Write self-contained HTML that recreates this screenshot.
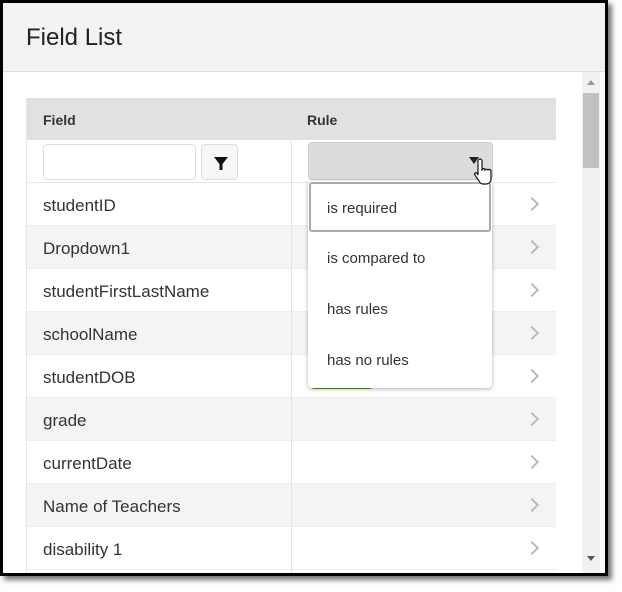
<!DOCTYPE html>
<html><head><style>
*{box-sizing:border-box;margin:0;padding:0}
body{width:622px;height:592px;background:#fff;position:relative;overflow:hidden;font-family:"Liberation Sans",sans-serif;color:#333}
.frame{position:absolute;left:0;top:0;width:608px;height:576px;border:3px solid #000;background:#fff;box-shadow:4px 4px 5px rgba(0,0,0,.55);overflow:hidden}
.title{position:absolute;left:0;top:0;width:602px;height:69px;background:#f3f3f3;border-bottom:1px solid #ddd}
.title span{position:absolute;left:23px;top:21px;font-size:24px;color:#222}
.sb{position:absolute;left:579px;top:69px;width:18px;height:502px;background:#f1f1f1}
.thumb{position:absolute;left:1px;top:21px;width:16px;height:75px;background:#c1c1c1}
.tbl{position:absolute;left:23px;top:95px;width:530px;height:480px;border-left:1px solid #e6e6e6}
.hdr{height:42px;background:#e1e1e1;position:relative;font-weight:bold;font-size:14px}
.hdr span{position:absolute;top:14px}
.div{position:absolute;left:264px;top:0;width:1px;height:480px;background:#e4e4e4}
.row{height:43px;position:relative;font-size:17px;border-bottom:1px solid #eee}
.row.g{background:#f4f4f4}
.row .t{position:absolute;left:16px;top:13px}
.chev{position:absolute;left:500px;top:16px;width:10px;height:10px;border-right:2px solid #bbb;border-top:2px solid #bbb;transform:rotate(45deg)}
.menu{position:absolute;left:305px;top:178px;width:184px;height:207px;background:#fff;border-radius:4px;box-shadow:0 1px 4px rgba(0,0,0,.3)}
.menu div{height:51px;font-size:15px;padding:17px 0 0 19px;color:#333}
.menu .sel{border:2px solid #aaa;border-radius:3px;margin:1px;height:50px;padding:16px 0 0 16px}
</style></head><body>
<div class="frame">
<div class="title"><span>Field List</span></div>
<div class="sb"><div style="position:absolute;left:5px;top:8px;border:4px solid transparent;border-bottom:5px solid #999;border-top:0"></div><div class="thumb"></div><div style="position:absolute;left:5px;top:484px;border:4px solid transparent;border-top:5px solid #555;border-bottom:0"></div></div>
<div class="tbl">
<div class="hdr"><span style="left:16px">Field</span><span style="left:280px">Rule</span></div>
<div class="row" style="border-bottom:1px solid #e6e6e6"><div style="position:absolute;left:16px;top:4px;width:153px;height:36px;border:1px solid #ddd;border-radius:4px"></div><div style="position:absolute;left:174px;top:4px;width:37px;height:36px;border:1px solid #ddd;border-radius:4px;background:#f7f7f7"><svg width="37" height="36" viewBox="0 0 37 36"><path d="M12 12h14l-5.5 7v6h-3v-6z" fill="#111"/></svg></div><div style="position:absolute;left:281px;top:2px;width:185px;height:38px;background:#dcdcdc;border:1px solid #ccc;border-radius:4px"><div style="position:absolute;left:160px;top:14px;border:5px solid transparent;border-top:7px solid #222;border-bottom:0"></div></div></div>
<div class="row"><span class="t">studentID</span><i class="chev"></i></div>
<div class="row g"><span class="t">Dropdown1</span><i class="chev"></i></div>
<div class="row"><span class="t">studentFirstLastName</span><i class="chev"></i></div>
<div class="row g"><span class="t">schoolName</span><i class="chev"></i></div>
<div class="row"><span class="t">studentDOB</span><i class="chev"></i><div style="position:absolute;left:282px;top:26px;width:66px;height:8px;border:2px solid #5a8a2a;border-top:0;border-radius:0 0 6px 6px"></div></div>
<div class="row g"><span class="t">grade</span><i class="chev"></i></div>
<div class="row"><span class="t">currentDate</span><i class="chev"></i></div>
<div class="row g"><span class="t">Name of Teachers</span><i class="chev"></i></div>
<div class="row"><span class="t">disability 1</span><i class="chev"></i></div>
<div class="div"></div>
</div>
<div class="menu"><div class="sel">is required</div><div>is compared to</div><div>has rules</div><div>has no rules</div></div>
<svg style="position:absolute;left:470px;top:154px" width="22" height="30" viewBox="0 0 22 30"><path d="M7 2c1 0 2 1 2 2v9l1-1c1-1 2 0 2 1 1-1 2-1 3 0 1-1 2-1 3 1v8c0 3-2 5-5 5h-3c-2 0-3-1-4-3l-4-6c-1-1 0-3 2-2l1 2V4c0-1 1-2 2-2z" fill="#fff" stroke="#111" stroke-width="1.2"/></svg>
</div>
</body></html>
